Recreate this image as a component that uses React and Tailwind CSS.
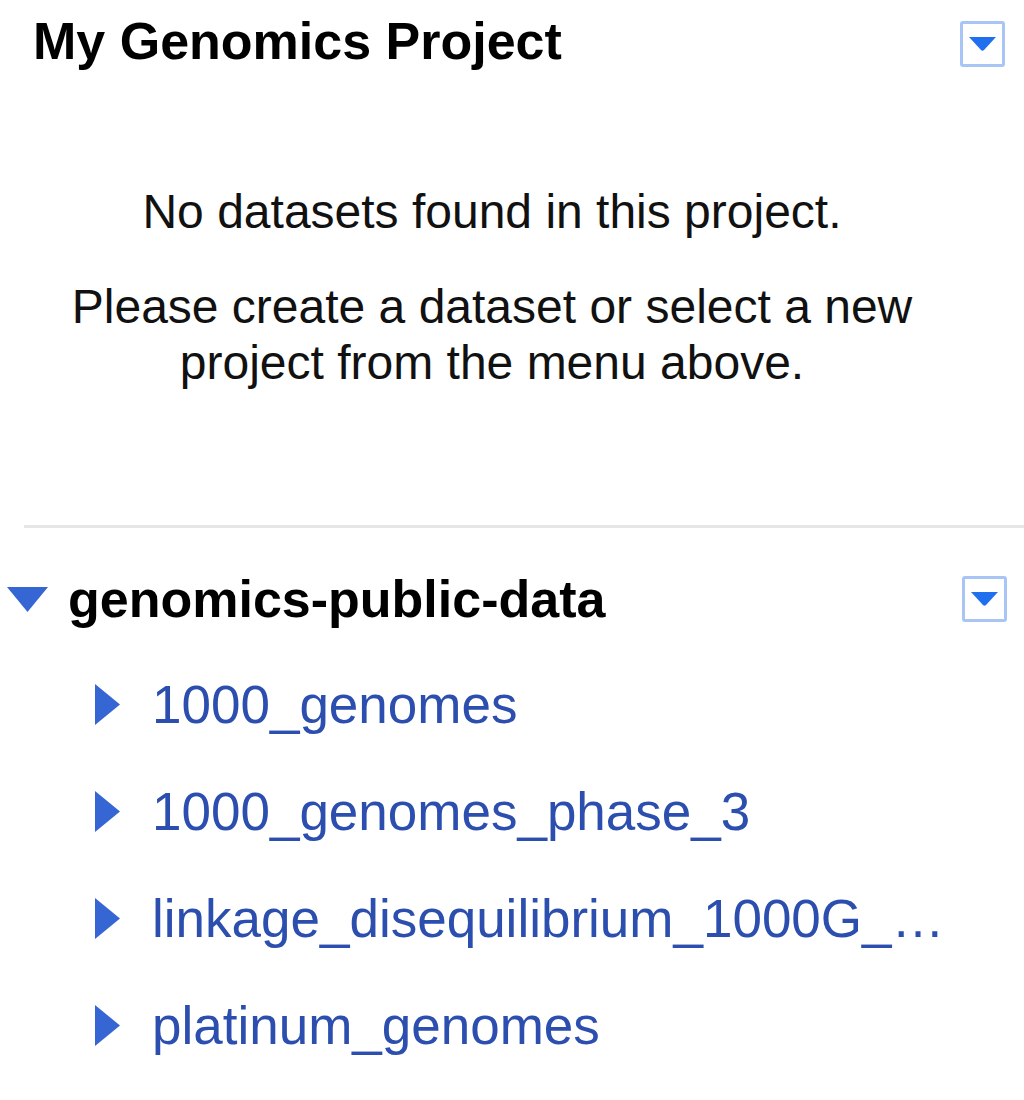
import React from 'react';

const datasets = [
  '1000_genomes',
  '1000_genomes_phase_3',
  'linkage_disequilibrium_1000G_phase_3',
  'platinum_genomes',
];

const MenuButton = ({ className = '' }) => (
  <button
    type="button"
    className={`flex h-[46px] w-[45px] items-center justify-center rounded-[3px] border-[3px] border-[#a9c5f6] bg-white ${className}`}
  >
    <svg width="27" height="14" viewBox="0 0 27 14">
      <path d="M0 0 H27 L15 13 Q13.5 14.5 12 13 Z" fill="#1f6fef" />
    </svg>
  </button>
);

const TriangleDown = () => (
  <svg width="41" height="25" viewBox="0 0 41 25">
    <polygon points="0,0 41,0 20.5,25" fill="#3566d4" />
  </svg>
);

const TriangleRight = () => (
  <svg width="25" height="41" viewBox="0 0 25 41">
    <polygon points="0,0 25,20.5 0,41" fill="#3566d4" />
  </svg>
);

export default function App() {
  return (
    <div className="min-h-[1100px] w-[1024px] bg-white font-['Liberation_Sans',Arial,sans-serif]">
      {/* Project header */}
      <div className="flex items-start justify-between pt-[11px] pl-[33px] pr-[19px]">
        <h1 className="text-[52px] font-bold leading-[60px] text-black">My Genomics Project</h1>
        <MenuButton className="mt-[10px]" />
      </div>

      {/* Empty state */}
      <div className="mt-[113px] w-[984px] px-[42px] text-center text-[48px] leading-[56px] text-[#111]">
        <p>No datasets found in this project.</p>
        <p className="mt-[39px]">Please create a dataset or select a new project from the menu above.</p>
      </div>

      <div className="ml-[24px] mt-[134px] h-[3px] bg-[#e6e6e6]" />

      {/* Public data group */}
      <div className="mt-[41px] flex items-center justify-between pl-[7px] pr-[17px]">
        <div className="flex items-center">
          <TriangleDown />
          <span className="ml-[20px] text-[52px] font-bold leading-[60px] text-black">genomics-public-data</span>
        </div>
        <MenuButton />
      </div>

      <ul className="mt-[22px]">
        {datasets.map((name) => (
          <li key={name} className="flex h-[107px] items-center pl-[95px]">
            <TriangleRight />
            <span className="ml-[32px] w-[808px] truncate text-[53px] leading-[61px] text-[#2b4eaf]">
              {name}
            </span>
          </li>
        ))}
      </ul>
    </div>
  );
}
